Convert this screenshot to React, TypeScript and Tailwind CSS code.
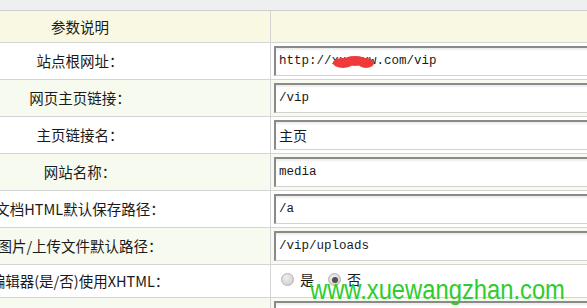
const rows = [
  { label: "站点根网址：", value: "http://xxxxxw.com/vip", alt: false, blot: true },
  { label: "网页主页链接：", value: "/vip", alt: true },
  { label: "主页链接名：", value: "主页", alt: false, cjk: true },
  { label: "网站名称：", value: "media", alt: true },
  { label: "文档HTML默认保存路径：", value: "/a", alt: false },
  { label: "图片/上传文件默认路径：", value: "/vip/uploads", alt: true },
];

const FakeInput = ({ value, cjk, blot }: { value: string; cjk?: boolean; blot?: boolean }) => (
  <div className="relative h-[30px] w-[400px] flex items-center bg-white border-t-2 border-l-2 border-[#8a8a8a] border-b border-r border-b-[#d2d2d2] border-r-[#d2d2d2] shadow-[inset_0_2px_2px_rgba(0,0,0,0.07)] pl-[3px]">
    <span className={cjk ? "text-[14px] font-['Noto_Sans_CJK_SC',sans-serif]" : "text-[12.5px] font-['Liberation_Mono',monospace]"}>
      {value}
    </span>
    {blot && (
      <svg className="absolute left-[57px] top-[7px]" width="42" height="14" viewBox="0 0 42 14">
        <ellipse cx="10" cy="8" rx="10" ry="5" fill="#f03a3a" />
        <ellipse cx="22" cy="6" rx="12" ry="5" fill="#f03a3a" />
        <ellipse cx="33" cy="8" rx="8" ry="5" fill="#f03a3a" />
      </svg>
    )}
  </div>
);

const Radio = ({ checked }: { checked?: boolean }) => (
  <span className="w-[13px] h-[13px] rounded-full border border-[#b4b4b4] bg-[radial-gradient(circle_at_40%_35%,#f0f0f0,#c8c8c8)] flex items-center justify-center">
    {checked && <span className="w-[6px] h-[6px] rounded-full bg-[#505050]" />}
  </span>
);

export default function App() {
  return (
    <div className="relative w-[587px] h-[308px] overflow-hidden bg-white text-[#1a1a1a] font-['Noto_Sans_CJK_SC',sans-serif]">
      <div className="h-[11px] bg-[#efefef] border-b border-[#cfcfcf]" />
      <div className="-ml-[110px] w-[800px]">
        <div className="grid grid-cols-[381px_1fr] h-[32px] bg-[#f9f9e3] border-b border-[#d4d4d4]">
          <div className="flex items-center justify-center border-r border-[#d4d4d4] text-[14.5px]">参数说明</div>
          <div />
        </div>
        {rows.map((r) => (
          <div
            key={r.label}
            className={`grid grid-cols-[381px_1fr] h-[37px] border-b border-[#d4d4d4] ${r.alt ? "bg-[#f7faee]" : "bg-white"}`}
          >
            <div className="flex items-center justify-center border-r border-[#d4d4d4] text-[14.5px] whitespace-nowrap">{r.label}</div>
            <div className="flex items-center pl-[3px]">
              <FakeInput value={r.value} cjk={r.cjk} blot={r.blot} />
            </div>
          </div>
        ))}
        <div className="grid grid-cols-[381px_1fr] h-[33px] border-b border-[#d4d4d4] bg-white">
          <div className="flex items-center justify-center border-r border-[#d4d4d4] text-[14.5px] whitespace-nowrap">编辑器(是/否)使用XHTML：</div>
          <div className="flex items-center pl-[10px] pb-[3px] text-[14px]">
            <Radio />
            <span className="ml-[6px]">是</span>
            <span className="ml-[14px]"><Radio checked /></span>
            <span className="ml-[6px]">否</span>
          </div>
        </div>
        <div className="grid grid-cols-[381px_1fr] h-[37px] border-b border-[#d4d4d4] bg-[#f7faee]">
          <div className="flex items-center justify-center border-r border-[#d4d4d4] text-[14.5px] whitespace-nowrap">模板默认风格：</div>
          <div className="flex items-center pl-[3px]">
            <FakeInput value="default" />
          </div>
        </div>
      </div>
      <div className="absolute left-[310px] top-[277px] text-[27px] leading-[27px] text-[#2ecc2e] font-['Liberation_Sans',Arial,sans-serif] origin-left scale-x-[0.88] whitespace-nowrap">
        www.xuewangzhan.com
      </div>
    </div>
  );
}
